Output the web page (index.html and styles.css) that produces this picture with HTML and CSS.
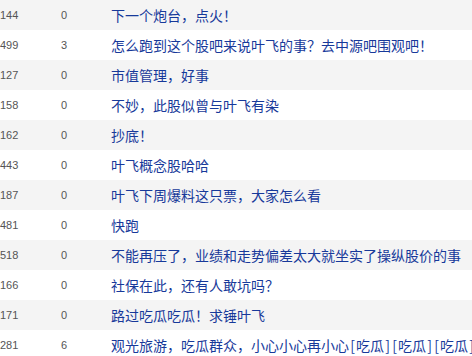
FILE: index.html
```html
<!DOCTYPE html>
<html>
<head>
<meta charset="utf-8">
<link rel="stylesheet" href="styles.css">
</head>
<body>
<div class="list">
  <div class="row alt"><span class="c1">144</span><span class="c2">0</span><a class="c3">下一个炮台，点火！</a></div>
  <div class="row"><span class="c1">499</span><span class="c2">3</span><a class="c3">怎么跑到这个股吧来说叶飞的事？去中源吧围观吧！</a></div>
  <div class="row alt"><span class="c1">127</span><span class="c2">0</span><a class="c3">市值管理，好事</a></div>
  <div class="row"><span class="c1">158</span><span class="c2">0</span><a class="c3">不妙，此股似曾与叶飞有染</a></div>
  <div class="row alt"><span class="c1">162</span><span class="c2">0</span><a class="c3">抄底！</a></div>
  <div class="row"><span class="c1">443</span><span class="c2">0</span><a class="c3">叶飞概念股哈哈</a></div>
  <div class="row alt"><span class="c1">187</span><span class="c2">0</span><a class="c3">叶飞下周爆料这只票，大家怎么看</a></div>
  <div class="row"><span class="c1">481</span><span class="c2">0</span><a class="c3">快跑</a></div>
  <div class="row alt"><span class="c1">518</span><span class="c2">0</span><a class="c3">不能再压了，业绩和走势偏差太大就坐实了操纵股价的事</a></div>
  <div class="row"><span class="c1">166</span><span class="c2">0</span><a class="c3">社保在此，还有人敢坑吗？</a></div>
  <div class="row alt"><span class="c1">171</span><span class="c2">0</span><a class="c3">路过吃瓜吃瓜！求锤叶飞</a></div>
  <div class="row"><span class="c1">281</span><span class="c2">6</span><a class="c3">观光旅游，吃瓜群众，小心小心再小心<span class="br">[</span>吃瓜<span class="br">]</span><span class="br">[</span>吃瓜<span class="br">]</span><span class="br">[</span>吃瓜<span class="br">]</span></a></div>
</div>
</body>
</html>
```
FILE: styles.css
```css
html, body {
  margin: 0;
  padding: 0;
  background: #fff;
}
.list {
  width: 472px;
  overflow: hidden;
}
.row {
  display: flex;
  height: 30px;
  line-height: 30px;
  white-space: nowrap;
  background: #fff;
}
.row.alt {
  background: #f4f4f4;
}
.c1, .c2 {
  font-family: "Liberation Sans", Arial, sans-serif;
  font-size: 11px;
  color: #555;
  flex: none;
}
.c1 {
  width: 61px;
}
.c2 {
  width: 50px;
}
.c3 {
  font-family: "Noto Sans CJK SC", sans-serif;
  font-size: 14px;
  color: #17399a;
  text-decoration: none;
  overflow: hidden;
  flex: 1;
}
.br {
  display: inline-block;
  width: 7px;
  text-align: center;
}
```
